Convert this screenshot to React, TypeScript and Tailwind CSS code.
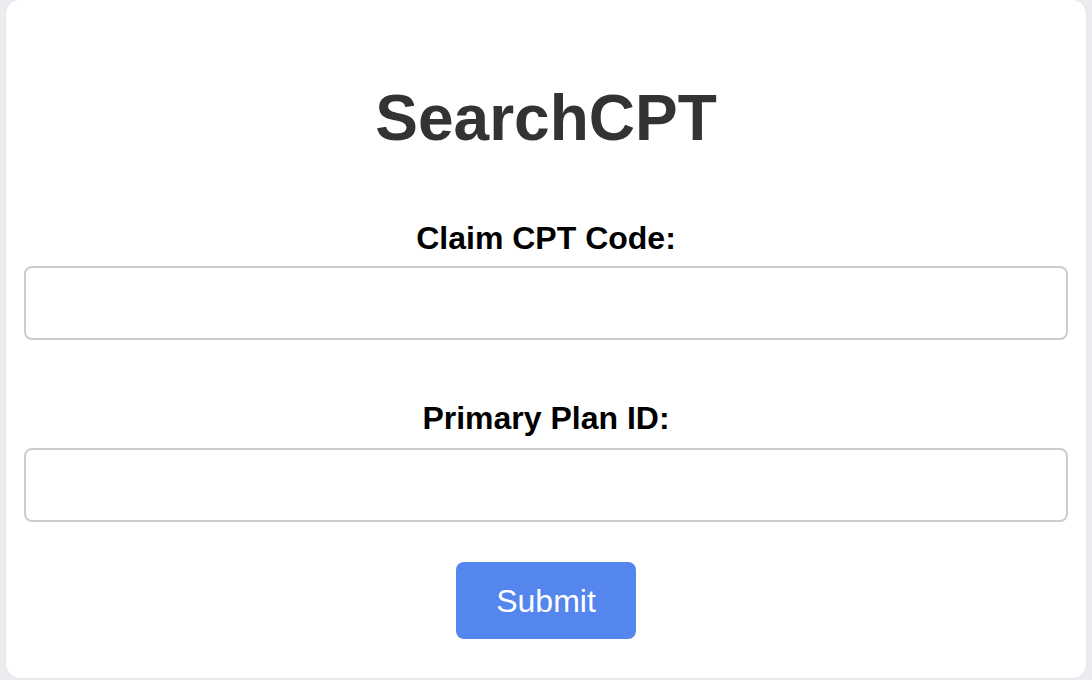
import { useState } from 'react';

export default function App() {
  const [cpt, setCpt] = useState('');
  const [plan, setPlan] = useState('');

  return (
    <div className="h-[680px] w-[1092px] bg-[#ebebf0] pl-[6px] font-['Liberation_Sans',Arial,sans-serif]">
      <div className="h-[678px] w-[1080px] rounded-[14px] bg-white px-[18px] shadow-[0_0_3px_rgba(0,0,0,0.06)]">
        <h1 className="pt-[82px] text-center text-[64px] font-bold leading-[1.15] text-[#333]">
          SearchCPT
        </h1>

        <form onSubmit={(e) => e.preventDefault()} className="flex flex-col items-center">
          {/* CPT code */}
          <label className="mt-[64px] text-[32px] font-bold leading-[1.15] text-black">
            Claim CPT Code:
          </label>
          <input
            type="text"
            value={cpt}
            onChange={(e) => setCpt(e.target.value)}
            className="mt-[10px] h-[74px] w-full rounded-[8px] border-2 border-[#cccccc] px-4 text-[28px] outline-none"
          />

          {/* Plan id */}
          <label className="mt-[60px] text-[32px] font-bold leading-[1.15] text-black">
            Primary Plan ID:
          </label>
          <input
            type="text"
            value={plan}
            onChange={(e) => setPlan(e.target.value)}
            className="mt-[11px] h-[74px] w-full rounded-[8px] border-2 border-[#cccccc] px-4 text-[28px] outline-none"
          />

          <button
            type="submit"
            className="mt-[40px] h-[77px] w-[180px] rounded-[8px] bg-[#5486ee] text-[32px] text-white"
          >
            Submit
          </button>
        </form>
      </div>
    </div>
  );
}
